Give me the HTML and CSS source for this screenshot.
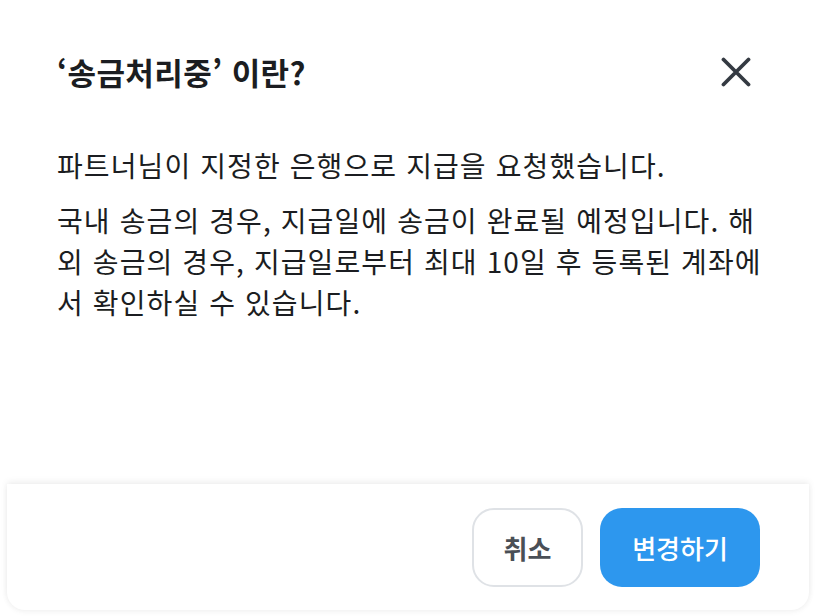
FILE: index.html
```html
<!DOCTYPE html>
<html lang="ko">
<head>
<meta charset="utf-8">
<link rel="stylesheet" href="styles.css">
</head>
<body>
<div class="modal">
  <div class="header">
    <h1 class="title">‘송금처리중’ 이란?</h1>
    <button class="close" aria-label="닫기">
      <svg width="30" height="30" viewBox="0 0 30 30"><path d="M2.5 2.5 L27.5 27.5 M27.5 2.5 L2.5 27.5" stroke="#343a42" stroke-width="3.8" stroke-linecap="round"/></svg>
    </button>
  </div>
  <div class="body">
    <p>파트너님이 지정한 은행으로 지급을 요청했습니다.</p>
    <p>국내 송금의 경우, 지급일에 송금이 완료될 예정입니다. 해외 송금의 경우, 지급일로부터 최대 10일 후 등록된 계좌에서 확인하실 수 있습니다.</p>
  </div>
  <div class="footer">
    <button class="btn btn-cancel">취소</button>
    <button class="btn btn-primary">변경하기</button>
  </div>
</div>
</body>
</html>
```
FILE: styles.css
```css
* { box-sizing: border-box; }
html, body { margin: 0; padding: 0; background: #fff; }
body {
  font-family: "Noto Sans CJK KR", "Noto Sans", sans-serif;
  color: #1b1d21;
}
.modal {
  height: 616px;
  display: flex;
  flex-direction: column;
}
.header {
  display: flex;
  align-items: center;
  justify-content: space-between;
  padding: 50px 65px 0 57px;
}
.title {
  margin: 0;
  font-size: 31px;
  font-weight: 700;
  line-height: 44px;
  letter-spacing: 0.4px;
}
.close {
  border: 0;
  background: none;
  padding: 0;
  width: 30px;
  height: 30px;
  display: flex;
}
.body {
  padding: 51px 46px 0 57px;
  flex: 1;
}
.body p {
  margin: 0 0 14px;
  font-size: 28px;
  line-height: 41px;
  letter-spacing: 1.1px;
}
.footer {
  margin: 0 7px 6px 7px;
  padding: 24px 49px 23px 0;
  display: flex;
  justify-content: flex-end;
  gap: 17px;
  border-radius: 0 0 18px 18px;
  box-shadow: 0 -2px 7px rgba(0,0,0,0.07), 0 2px 6px rgba(0,0,0,0.04);
  background: #fff;
}
.btn {
  height: 79px;
  border-radius: 22px;
  font-family: "Noto Sans CJK KR", sans-serif;
  font-size: 26px;
  cursor: pointer;
}
.btn-cancel {
  width: 111px;
  background: #fff;
  border: 2px solid #dfe2e6;
  color: #4a4f56;
  font-weight: 700;
}
.btn-primary {
  width: 160px;
  background: #2d97ee;
  border: 0;
  color: #fff;
  font-weight: 500;
}
```
